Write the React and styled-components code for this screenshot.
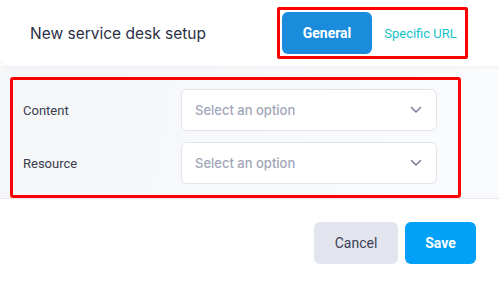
import React from "react";
import styled, { createGlobalStyle } from "styled-components";

const GlobalStyle = createGlobalStyle`
  body {
    margin: 0;
    background: #ffffff;
    font-family: Roboto, "Liberation Sans", sans-serif;
  }
  * { box-sizing: border-box; }
`;

const Modal = styled.div`
  width: 499px;
  height: 286px;
  display: flex;
  flex-direction: column;
  background: #ffffff;
  overflow: hidden;
`;

const Header = styled.header`
  height: 66px;
  flex-shrink: 0;
  display: flex;
  align-items: center;
  justify-content: space-between;
  padding: 0 31px 0 30px;
  background: #ffffff;
  border-bottom-left-radius: 10px;
  box-shadow: 0 1px 4px rgba(30, 40, 70, 0.06);
  position: relative;
  z-index: 1;
`;

const Title = styled.h1`
  margin: 0;
  font-family: Inter, Roboto, sans-serif;
  font-size: 15.5px;
  font-weight: 400;
  color: #2b3044;
`;

const TabGroup = styled.div`
  display: flex;
  padding: 2px 0 2px 2px;
  border: 3px solid #ff0000;
  border-radius: 2px;
  width: 191px;
  height: 52px;
`;

const Tab = styled.button`
  flex: ${(p) => (p.$active ? "0 0 90px" : "1")};
  border: none;
  border-radius: 6px;
  font-family: Roboto, "Liberation Sans", sans-serif;
  font-size: ${(p) => (p.$active ? 14 : 13)}px;
  font-weight: ${(p) => (p.$active ? 700 : 400)};
  background: ${(p) => (p.$active ? "#1a8cdb" : "transparent")};
  color: ${(p) => (p.$active ? "#ffffff" : "#16c3c9")};
  padding: 0 0 0 ${(p) => (p.$active ? 0 : 4)}px;
  cursor: pointer;
`;

const Body = styled.div`
  flex: 0 0 133px;
  padding: 11px 0 0 10px;
  background: linear-gradient(100deg, #f5f6f8 0%, #fafbfc 100%);
  border-bottom: 1px solid #e8e9ee;
`;

const FieldBox = styled.div`
  width: 451px;
  height: 121px;
  border: 3px solid #ff0000;
  border-radius: 3px;
  padding: 9px 21px 0 10px;
  display: flex;
  flex-direction: column;
  gap: 11px;
`;

const Row = styled.div`
  display: flex;
  align-items: center;
  height: 42px;
`;

const Label = styled.label`
  width: 158px;
  font-size: 13px;
  color: #373c4e;
`;

const Select = styled.div`
  flex: 1;
  height: 42px;
  display: flex;
  align-items: center;
  justify-content: space-between;
  padding: 0 14px 0 13px;
  background: #ffffff;
  border: 1px solid #e2e4ec;
  border-radius: 6px;
  font-family: Inter, Roboto, sans-serif;
  font-size: 13px;
  font-weight: 500;
  color: #a2a6b8;
`;

const Footer = styled.footer`
  flex: 1;
  display: flex;
  justify-content: flex-end;
  align-items: flex-start;
  gap: 7px;
  padding: 23px 23px 0 0;
`;

const Button = styled.button`
  height: 42px;
  padding: 0;
  width: ${(p) => (p.$primary ? 71 : 84)}px;
  border: none;
  border-radius: 6px;
  font-family: Roboto, "Liberation Sans", sans-serif;
  font-size: 14px;
  font-weight: ${(p) => (p.$primary ? 700 : 400)};
  background: ${(p) => (p.$primary ? "#02a0f6" : "#e3e5ee")};
  color: ${(p) => (p.$primary ? "#ffffff" : "#3b4056")};
  cursor: pointer;
`;

const Chevron = () => (
  <svg width="12" height="8" viewBox="0 0 12 8" fill="none">
    <path d="M1.5 1.5L6 6L10.5 1.5" stroke="#777c92" strokeWidth="1.5" strokeLinecap="round" strokeLinejoin="round" />
  </svg>
);

const fields = ["Content", "Resource"];

export default function App() {
  return (
    <>
      <GlobalStyle />
      <Modal>
        <Header>
          <Title>New service desk setup</Title>
          <TabGroup>
            <Tab $active>General</Tab>
            <Tab>Specific URL</Tab>
          </TabGroup>
        </Header>
        <Body>
          <FieldBox>
            {fields.map((f) => (
              <Row key={f}>
                <Label>{f}</Label>
                <Select>
                  <span>Select an option</span>
                  <Chevron />
                </Select>
              </Row>
            ))}
          </FieldBox>
        </Body>
        <Footer>
          <Button>Cancel</Button>
          <Button $primary>Save</Button>
        </Footer>
      </Modal>
    </>
  );
}
